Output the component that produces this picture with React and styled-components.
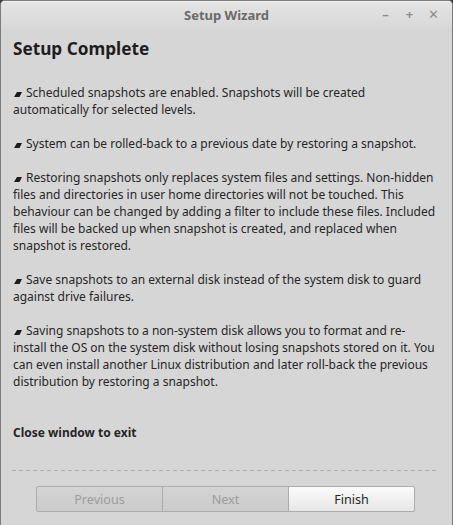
import React from "react";
import styled, { createGlobalStyle } from "styled-components";

const GlobalStyle = createGlobalStyle`
  html, body {
    margin: 0;
    padding: 0;
    background: #3a3a3a;
  }
  body {
    font-family: "Noto Sans", "Open Sans", "DejaVu Sans", sans-serif;
  }
`;

// wrapped the same way the dialog wraps them
const notes = [
  [
    "Scheduled snapshots are enabled. Snapshots will be created",
    "automatically for selected levels.",
  ],
  ["System can be rolled-back to a previous date by restoring a snapshot."],
  [
    "Restoring snapshots only replaces system files and settings. Non-hidden",
    "files and directories in user home directories will not be touched. This",
    "behaviour can be changed by adding a filter to include these files. Included",
    "files will be backed up when snapshot is created, and replaced when",
    "snapshot is restored.",
  ],
  [
    "Save snapshots to an external disk instead of the system disk to guard",
    "against drive failures.",
  ],
  [
    "Saving snapshots to a non-system disk allows you to format and re-",
    "install the OS on the system disk without losing snapshots stored on it. You",
    "can even install another Linux distribution and later roll-back the previous",
    "distribution by restoring a snapshot.",
  ],
];

const BulletMark = () => (
  <Bullet viewBox="0 0 8 5" width="8" height="5">
    <polygon points="3,0 8,0 5.5,5 0,5" fill="#1c1c1c" />
  </Bullet>
);

export default function App() {
  return (
    <>
      <GlobalStyle />
      <Window>
        <TitleBar>
          <TitleText>Setup Wizard</TitleText>
          <Controls>
            <Control>–</Control>
            <Control>+</Control>
            <Control>✕</Control>
          </Controls>
        </TitleBar>
        <Body>
          <Heading>Setup Complete</Heading>
          <Notes>
            {notes.map((lines) => (
              <Note key={lines[0]}>
                {lines.map((line, i) => (
                  <Line key={line}>
                    {i === 0 && <BulletMark />}
                    {line}
                  </Line>
                ))}
              </Note>
            ))}
          </Notes>
          <Exit>Close window to exit</Exit>
        </Body>
        <Footer>
          <Separator />
          <ButtonRow>
            <WizardButton disabled>Previous</WizardButton>
            <WizardButton disabled>Next</WizardButton>
            <WizardButton>Finish</WizardButton>
          </ButtonRow>
        </Footer>
      </Window>
    </>
  );
}

const Window = styled.div`
  box-sizing: border-box;
  width: 453px;
  height: 525px;
  display: flex;
  flex-direction: column;
  background: #d6d6d6;
  border: 1px solid #7b7b7b;
  border-bottom: none;
  border-radius: 5px 5px 0 0;
  overflow: hidden;
`;

const TitleBar = styled.div`
  position: relative;
  height: 27px;
  display: flex;
  align-items: center;
  justify-content: center;
  background: linear-gradient(#e4e4e4, #d8d8d8);
  box-shadow: inset 0 1px 0 #f2f2f2;
`;

const TitleText = styled.div`
  font-size: 13px;
  font-weight: bold;
  color: #6a6a6a;
  padding-top: 1px;
`;

const Controls = styled.div`
  position: absolute;
  right: 13px;
  top: 5px;
  display: flex;
  gap: 13px;
`;

const Control = styled.span`
  width: 11px;
  text-align: center;
  font-size: 13px;
  font-weight: bold;
  color: #8e8e8e;
  line-height: 16px;
`;

const Body = styled.div`
  flex: 1;
  padding: 8px 12px 0;
  color: #262626;
`;

const Heading = styled.h1`
  margin: 0 0 22px;
  font-size: 17.2px;
  line-height: 26px;
  font-weight: bold;
  color: #1e1e1e;
`;

const Notes = styled.div`
  display: flex;
  flex-direction: column;
  gap: 17px;
`;

const Note = styled.div`
  font-size: 12px;
  line-height: 17px;
`;

const Line = styled.div`
  white-space: nowrap;
`;

const Bullet = styled.svg`
  display: inline-block;
  margin: 0 4px 0 1px;
  vertical-align: 0;
`;

const Exit = styled.p`
  margin: 34px 0 0;
  font-size: 12px;
  line-height: 17px;
  font-weight: bold;
`;

const Footer = styled.div`
  padding: 0 15px 13px 11px;
`;

const Separator = styled.div`
  height: 1px;
  background: repeating-linear-gradient(90deg, #aeaeae 0 4px, transparent 4px 7px);
  margin-bottom: 15px;
`;

const ButtonRow = styled.div`
  display: flex;
  justify-content: center;
  padding-left: 3px;
`;

const WizardButton = styled.button`
  box-sizing: border-box;
  width: 127px;
  height: 26px;
  margin-left: -1px;
  font-family: inherit;
  font-size: 12.6px;
  color: ${(p) => (p.disabled ? "#9c9c9c" : "#262626")};
  background: ${(p) =>
    p.disabled
      ? "linear-gradient(#d4d4d4, #cbcbcb)"
      : "linear-gradient(#fbfbfb, #e6e6e6)"};
  border: 1px solid #acacac;
  border-radius: 0;
  &:first-child {
    border-radius: 2px 0 0 2px;
  }
  &:last-child {
    border-radius: 0 2px 2px 0;
  }
`;
